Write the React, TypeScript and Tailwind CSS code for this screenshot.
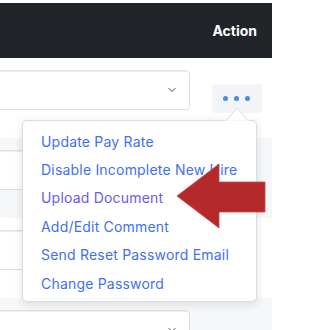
import { ChevronDown } from "lucide-react";
import clsx from "clsx";

const menuItems = [
  { label: "Update Pay Rate" },
  { label: "Disable Incomplete New Hire" },
  { label: "Upload Document", visited: true },
  { label: "Add/Edit Comment" },
  { label: "Send Reset Password Email" },
  { label: "Change Password" },
];

function SelectBox({ chevron }: { chevron?: boolean }) {
  return (
    <div className="-ml-6 flex h-[40px] items-center justify-end rounded-[4px] border border-[#dcdfe3] bg-white pr-[11px] shadow-[inset_0_1px_0_#eceef1]">
      {chevron && <ChevronDown className="h-[12px] w-[12px] text-[#444]" strokeWidth={2} />}
    </div>
  );
}

function Row({ striped, chevron, children }: { striped?: boolean; chevron?: boolean; children?: React.ReactNode }) {
  return (
    <div className={clsx("flex h-[80px] pt-[12px]", striped ? "bg-[#f6f7f9]" : "bg-white")}>
      <div className="w-[201px] pr-[11px]">
        <SelectBox chevron={chevron} />
      </div>
      <div className="flex flex-1 justify-center">{children}</div>
    </div>
  );
}

export default function App() {
  return (
    <div
      className="relative h-[330px] w-[306px] overflow-hidden bg-white"
      style={{ fontFamily: "Inter, 'Open Sans', sans-serif" }}
    >
      <div className="w-[272px] pt-[3px]">
        <div className="flex h-[55px] items-center justify-end bg-[#212529] pr-[15px]">
          <span className="text-[14px] font-bold text-white">Action</span>
        </div>
        <Row chevron>
          <button className="mt-[14px] flex h-[29px] w-[50px] items-center justify-center gap-[6px] rounded-[3px] bg-[#f2f4f7]">
            <span className="h-[5px] w-[5px] rounded-full bg-[#4a8be8]" />
            <span className="h-[5px] w-[5px] rounded-full bg-[#4a8be8]" />
            <span className="h-[5px] w-[5px] rounded-full bg-[#4a8be8]" />
          </button>
        </Row>
        <Row striped />
        <Row />
        <Row striped chevron />
      </div>

      {/* dropdown menu */}
      <div className="absolute left-[22px] top-[120px] w-[235px] rounded-[5px] border border-[#d9dce0] bg-white pb-[4px] pt-[6px] shadow-[0_2px_10px_rgba(0,0,0,0.12)]">
        {menuItems.map((item) => (
          <div
            key={item.label}
            className={clsx(
              "flex h-[28.4px] items-center pl-[18px] text-[14px] tracking-[0.2px]",
              item.visited ? "text-[#6a5ce6]" : "text-[#3f6ff2]"
            )}
          >
            {item.label}
          </div>
        ))}
      </div>
      <svg className="absolute left-[225px] top-[107px]" width="24" height="15" viewBox="0 0 24 15">
        <polygon points="1,14 12,1 23,14" fill="#fff" stroke="#d9dce0" strokeWidth="1" />
        <rect x="0" y="13.5" width="24" height="2" fill="#fff" />
      </svg>

      {/* red annotation arrow */}
      <svg className="absolute left-0 top-0" width="306" height="330" viewBox="0 0 306 330">
        <polygon
          points="177,196 219,164 219,182 265,182 265,212 219,212 219,228"
          fill="#b5292b"
          stroke="#c44a4b"
          strokeWidth="0.8"
        />
      </svg>
    </div>
  );
}
